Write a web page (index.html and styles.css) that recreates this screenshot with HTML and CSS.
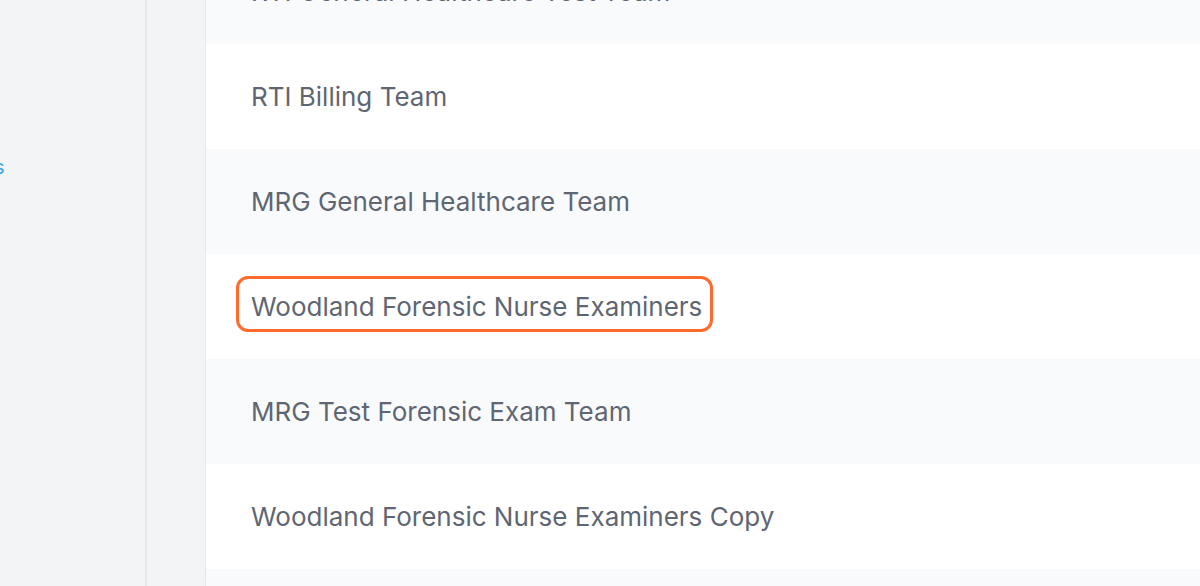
FILE: index.html
```html
<!DOCTYPE html>
<html>
<head>
<meta charset="utf-8">
<link rel="stylesheet" href="styles.css">
</head>
<body>
<div class="app">
  <aside class="sidebar">
    <span class="side-link">Teams</span>
  </aside>
  <div class="rail"></div>
  <main class="main">
    <ul class="team-list">
      <li class="row">RTI General Healthcare Test Team</li>
      <li class="row">RTI Billing Team</li>
      <li class="row">MRG General Healthcare Team</li>
      <li class="row"><span class="hl">Woodland Forensic Nurse Examiners</span></li>
      <li class="row">MRG Test Forensic Exam Team</li>
      <li class="row">Woodland Forensic Nurse Examiners Copy</li>
      <li class="row">Woodland Forensic Nurse Examiners Test</li>
    </ul>
  </main>
</div>
</body>
</html>
```

FILE: styles.css
```css
html, body {
  margin: 0;
  padding: 0;
  height: 100%;
  overflow: hidden;
  font-family: Inter, "Noto Sans", sans-serif;
}

.app {
  display: flex;
  height: 586px;
  background: #f3f4f6;
}

.sidebar {
  width: 145px;
  flex: none;
  border-right: 2px solid #e5e7eb;
  padding-top: 153px;
  box-sizing: content-box;
  overflow: hidden;
}

.side-link {
  display: block;
  margin-left: -58px;
  font-size: 20px;
  line-height: 28px;
  color: #38a3e8;
  white-space: nowrap;
}

.rail {
  width: 58px;
  flex: none;
  background: #f3f4f6;
  border-right: 1px solid #e8e9ec;
}

.main {
  flex: 1;
  overflow: hidden;
  background: #ffffff;
}

.team-list {
  list-style: none;
  margin: -61px 0 0 0;
  padding: 0;
}

.row {
  height: 105px;
  display: flex;
  align-items: center;
  padding-left: 45px;
  font-size: 26px;
  color: #5f6673;
  background: #ffffff;
  white-space: nowrap;
}

.row:nth-child(odd) {
  background: #f9fafb;
}

.hl {
  position: relative;
}

.hl::before {
  content: "";
  position: absolute;
  left: -15px;
  right: -11px;
  top: -15px;
  bottom: -10px;
  border: 3px solid #ff6b2c;
  border-radius: 12px;
}
```
